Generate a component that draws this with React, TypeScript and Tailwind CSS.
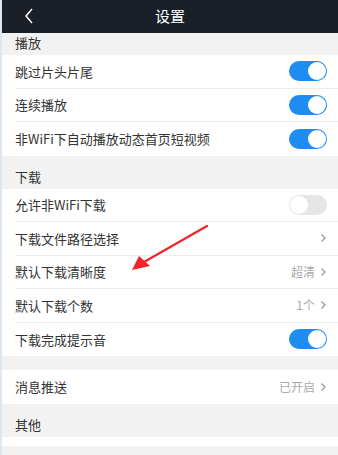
import React from "react";

type Row = {
  label: string;
  toggle?: boolean;
  on?: boolean;
  value?: string;
  chevron?: boolean;
};

const font = { fontFamily: '"Noto Sans CJK SC", "Noto Sans", sans-serif' };

function Toggle({ on }: { on: boolean }) {
  return on ? (
    <div className="flex h-[20px] w-[38px] items-center justify-end rounded-full bg-[#1e8cf0] pr-[1px]">
      <div className="h-[18px] w-[18px] rounded-full bg-white" />
    </div>
  ) : (
    <div className="flex h-[20px] w-[38px] items-center justify-start rounded-full bg-[#e6e6e6] pl-[1px]">
      <div className="h-[18px] w-[18px] rounded-full bg-white" />
    </div>
  );
}

function Chevron() {
  return (
    <svg width="7" height="10" viewBox="0 0 7 10" className="ml-[5px]">
      <path d="M1.5 1.5 L5 5 L1.5 8.5" fill="none" stroke="#999" strokeWidth="1.3" />
    </svg>
  );
}

function SettingRow({ row, last }: { row: Row; last?: boolean }) {
  return (
    <div className="bg-white pl-[13px]">
      <div
        className={
          "flex h-[33.5px] items-center justify-between pr-[11px] " +
          (last ? "" : "border-b border-[#ececec]")
        }
      >
        <span className="text-[13px] text-[#333]">{row.label}</span>
        {row.toggle ? (
          <Toggle on={!!row.on} />
        ) : (
          <div className="flex items-center">
            {row.value && <span className="text-[12px] text-[#aaa]">{row.value}</span>}
            <Chevron />
          </div>
        )}
      </div>
    </div>
  );
}

function SectionHeader({ title, gap }: { title: string; gap?: boolean }) {
  return (
    <div className={"flex items-end bg-[#f2f2f2] pb-[2px] pl-[13px] " + (gap ? "h-[33px]" : "h-[22px]")}>
      <span className="text-[13px] leading-[20px] text-[#333]">{title}</span>
    </div>
  );
}

const play: Row[] = [
  { label: "跳过片头片尾", toggle: true, on: true },
  { label: "连续播放", toggle: true, on: true },
  { label: "非WiFi下自动播放动态首页短视频", toggle: true, on: true },
];

const download: Row[] = [
  { label: "允许非WiFi下载", toggle: true, on: false },
  { label: "下载文件路径选择", chevron: true },
  { label: "默认下载清晰度", value: "超清", chevron: true },
  { label: "默认下载个数", value: "1个", chevron: true },
  { label: "下载完成提示音", toggle: true, on: true },
];

export default function App() {
  return (
    <div className="relative h-[455px] w-[338px] overflow-hidden border-l-2 border-[#dde7f2] bg-[#f2f2f2]" style={font}>
      <div className="relative flex h-[33px] items-center justify-center bg-[#1b1f28]">
        <svg width="10" height="16" viewBox="0 0 10 16" className="absolute left-[22px] top-[8px]">
          <path d="M8 1 L2 8 L8 15" fill="none" stroke="#fff" strokeWidth="1.5" />
        </svg>
        <span className="text-[15px] text-white">设置</span>
      </div>

      <SectionHeader title="播放" />
      {play.map((r, i) => (
        <SettingRow key={r.label} row={r} last={i === play.length - 1} />
      ))}

      <SectionHeader title="下载" gap />
      {download.map((r, i) => (
        <SettingRow key={r.label} row={r} last={i === download.length - 1} />
      ))}

      <div className="h-[14px]" />
      <SettingRow row={{ label: "消息推送", value: "已开启", chevron: true }} last />

      <SectionHeader title="其他" gap />
      <div className="h-[9px] bg-white" />

      <svg className="absolute left-0 top-0" width="338" height="455" viewBox="0 0 338 455">
        <path d="M205 226 L142 262" stroke="#f0242a" strokeWidth="2.2" strokeLinecap="round" />
        <path d="M130 270 L137 256 L148 266 Z" fill="#f0242a" />
      </svg>
    </div>
  );
}
